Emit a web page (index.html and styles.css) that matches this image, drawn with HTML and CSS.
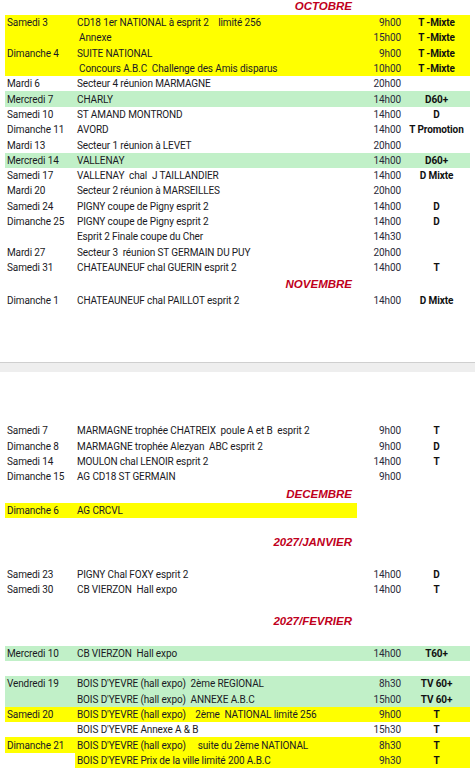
FILE: index.html
```html
<!DOCTYPE html>
<html lang="fr">
<head>
<meta charset="utf-8">
<title>Calendrier</title>
<link rel="stylesheet" href="styles.css">
</head>
<body>
<div class="sheet">
  <div class="row head first"><div></div><div class="month">OCTOBRE</div><div></div><div></div></div>
  <div class="row y"><div class="d">Samedi 3</div><div class="e">CD18 1er NATIONAL à esprit 2&nbsp;&nbsp;&nbsp; limité 256</div><div class="t">9h00</div><div class="c">T -Mixte</div></div>
  <div class="row y"><div class="d"></div><div class="e ind">Annexe</div><div class="t">15h00</div><div class="c">T -Mixte</div></div>
  <div class="row y"><div class="d">Dimanche 4</div><div class="e">SUITE NATIONAL</div><div class="t">9h00</div><div class="c">T -Mixte</div></div>
  <div class="row y"><div class="d"></div><div class="e ind">Concours A.B.C&nbsp; Challenge des Amis disparus</div><div class="t">10h00</div><div class="c">T -Mixte</div></div>
  <div class="row"><div class="d">Mardi 6</div><div class="e">Secteur 4 réunion MARMAGNE</div><div class="t">20h00</div><div class="c"></div></div>
  <div class="row g"><div class="d">Mercredi 7</div><div class="e">CHARLY</div><div class="t">14h00</div><div class="c">D60+</div></div>
  <div class="row"><div class="d">Samedi 10</div><div class="e">ST AMAND MONTROND</div><div class="t">14h00</div><div class="c">D</div></div>
  <div class="row"><div class="d">Dimanche 11</div><div class="e">AVORD</div><div class="t">14h00</div><div class="c">T Promotion</div></div>
  <div class="row"><div class="d">Mardi 13</div><div class="e">Secteur 1 réunion à LEVET</div><div class="t">20h00</div><div class="c"></div></div>
  <div class="row g"><div class="d">Mercredi 14</div><div class="e">VALLENAY</div><div class="t">14h00</div><div class="c">D60+</div></div>
  <div class="row"><div class="d">Samedi 17</div><div class="e">VALLENAY&nbsp; chal&nbsp; J TAILLANDIER</div><div class="t">14h00</div><div class="c">D Mixte</div></div>
  <div class="row"><div class="d">Mardi 20</div><div class="e">Secteur 2 réunion à MARSEILLES</div><div class="t">20h00</div><div class="c"></div></div>
  <div class="row"><div class="d">Samedi 24</div><div class="e">PIGNY coupe de Pigny esprit 2</div><div class="t">14h00</div><div class="c">D</div></div>
  <div class="row"><div class="d">Dimanche 25</div><div class="e">PIGNY coupe de Pigny esprit 2</div><div class="t">14h00</div><div class="c">D</div></div>
  <div class="row"><div class="d"></div><div class="e">Esprit 2 Finale coupe du Cher</div><div class="t">14h30</div><div class="c"></div></div>
  <div class="row"><div class="d">Mardi 27</div><div class="e">Secteur 3&nbsp; réunion ST GERMAIN DU PUY</div><div class="t">20h00</div><div class="c"></div></div>
  <div class="row"><div class="d">Samedi 31</div><div class="e">CHATEAUNEUF chal GUERIN esprit 2</div><div class="t">14h00</div><div class="c">T</div></div>
  <div class="row head"><div></div><div class="month">NOVEMBRE</div><div></div><div></div></div>
  <div class="row"><div class="d">Dimanche 1</div><div class="e">CHATEAUNEUF chal PAILLOT esprit 2</div><div class="t">14h00</div><div class="c">D Mixte</div></div>
</div>

<div class="pagebreak"></div>

<div class="sheet second">
  <div class="row"><div class="d">Samedi 7</div><div class="e">MARMAGNE trophée CHATREIX&nbsp; poule A et B&nbsp; esprit 2</div><div class="t">9h00</div><div class="c">T</div></div>
  <div class="row"><div class="d">Dimanche 8</div><div class="e">MARMAGNE trophée Alezyan&nbsp; ABC esprit 2</div><div class="t">9h00</div><div class="c">D</div></div>
  <div class="row"><div class="d">Samedi 14</div><div class="e">MOULON chal LENOIR esprit 2</div><div class="t">14h00</div><div class="c">T</div></div>
  <div class="row"><div class="d">Dimanche 15</div><div class="e">AG CD18 ST GERMAIN</div><div class="t">9h00</div><div class="c"></div></div>
  <div class="row head"><div></div><div class="month">DECEMBRE</div><div></div><div></div></div>
  <div class="row"><div class="d ycell">Dimanche 6</div><div class="e ycell">AG CRCVL</div><div class="t"></div><div class="c"></div></div>
  <div class="row"></div>
  <div class="row head"><div></div><div class="month">2027/JANVIER</div><div></div><div></div></div>
  <div class="row"></div>
  <div class="row"><div class="d">Samedi 23</div><div class="e">PIGNY Chal FOXY esprit 2</div><div class="t">14h00</div><div class="c">D</div></div>
  <div class="row"><div class="d">Samedi 30</div><div class="e">CB VIERZON&nbsp; Hall expo</div><div class="t">14h00</div><div class="c">T</div></div>
  <div class="row"></div>
  <div class="row head"><div></div><div class="month">2027/FEVRIER</div><div></div><div></div></div>
  <div class="row"></div>
  <div class="row g"><div class="d">Mercredi 10</div><div class="e">CB VIERZON&nbsp; Hall expo</div><div class="t">14h00</div><div class="c">T60+</div></div>
  <div class="row"></div>
  <div class="row g"><div class="d">Vendredi 19</div><div class="e">BOIS D'YEVRE (hall expo)&nbsp; 2ème REGIONAL</div><div class="t">8h30</div><div class="c">TV 60+</div></div>
  <div class="row g"><div class="d"></div><div class="e">BOIS D'YEVRE (hall expo)&nbsp; ANNEXE A.B.C</div><div class="t">15h00</div><div class="c">TV 60+</div></div>
  <div class="row y"><div class="d">Samedi 20</div><div class="e">BOIS D'YEVRE (hall expo)&nbsp;&nbsp;&nbsp; 2ème&nbsp; NATIONAL limité 256</div><div class="t">9h00</div><div class="c">T</div></div>
  <div class="row"><div class="d"></div><div class="e">BOIS D'YEVRE Annexe A &amp; B</div><div class="t">15h30</div><div class="c">T</div></div>
  <div class="row y"><div class="d">Dimanche 21</div><div class="e">BOIS D'YEVRE (hall expo)&nbsp;&nbsp;&nbsp;&nbsp; suite du 2ème NATIONAL</div><div class="t">8h30</div><div class="c">T</div></div>
  <div class="row"><div class="d"></div><div class="e ycell">BOIS D'YEVRE Prix de la ville limité 200 A.B.C</div><div class="t ycell">9h30</div><div class="c ycell">T</div></div>
</div>
</body>
</html>
```

FILE: styles.css
```css
html, body {
  margin: 0;
  padding: 0;
  background: #ffffff;
}

body {
  font-family: Roboto, "Liberation Sans", Arial, sans-serif;
  font-size: 10px;
  color: #1a1a24;
  width: 475px;
  overflow: hidden;
}

.sheet {
  margin-left: 5px;
  width: 465px;
  display: flex;
  flex-direction: column;
}

.second {
  margin-top: 51px;
}

.row {
  display: grid;
  grid-template-columns: 70px 282px 46px 67px;
  height: 15.3px;
  align-items: center;
  white-space: nowrap;
  letter-spacing: -0.12px;
}

.row > div {
  height: 100%;
  display: flex;
  align-items: center;
  overflow: visible;
}

.row.head {
  height: 18px;
}

.row.head.first {
  height: 15px;
}

.row.head.first .month {
  align-items: flex-start;
  padding-top: 0;
}

.month {
  justify-content: flex-end;
  padding-right: 5px;
  font-family: "Liberation Sans", Arial, sans-serif;
  font-weight: bold;
  font-style: italic;
  font-size: 11.5px;
  letter-spacing: 0;
  color: #c0001c;
}

.d {
  padding-left: 2px;
}

.e {
  padding-left: 2px;
}

.e.ind {
  padding-left: 4px;
}

.t {
  justify-content: flex-end;
  padding-right: 2px;
  color: #2a2a3a;
}

.c {
  justify-content: center;
  font-weight: bold;
  color: #111111;
}

.y {
  background: #ffff00;
}

.ycell {
  background: #ffff00;
}

.g {
  background: #c1f0c8;
}

.pagebreak {
  margin-top: 54px;
  height: 9px;
  background: #eeeeee;
  border-top: 1px solid #cfcfcf;
}
```
